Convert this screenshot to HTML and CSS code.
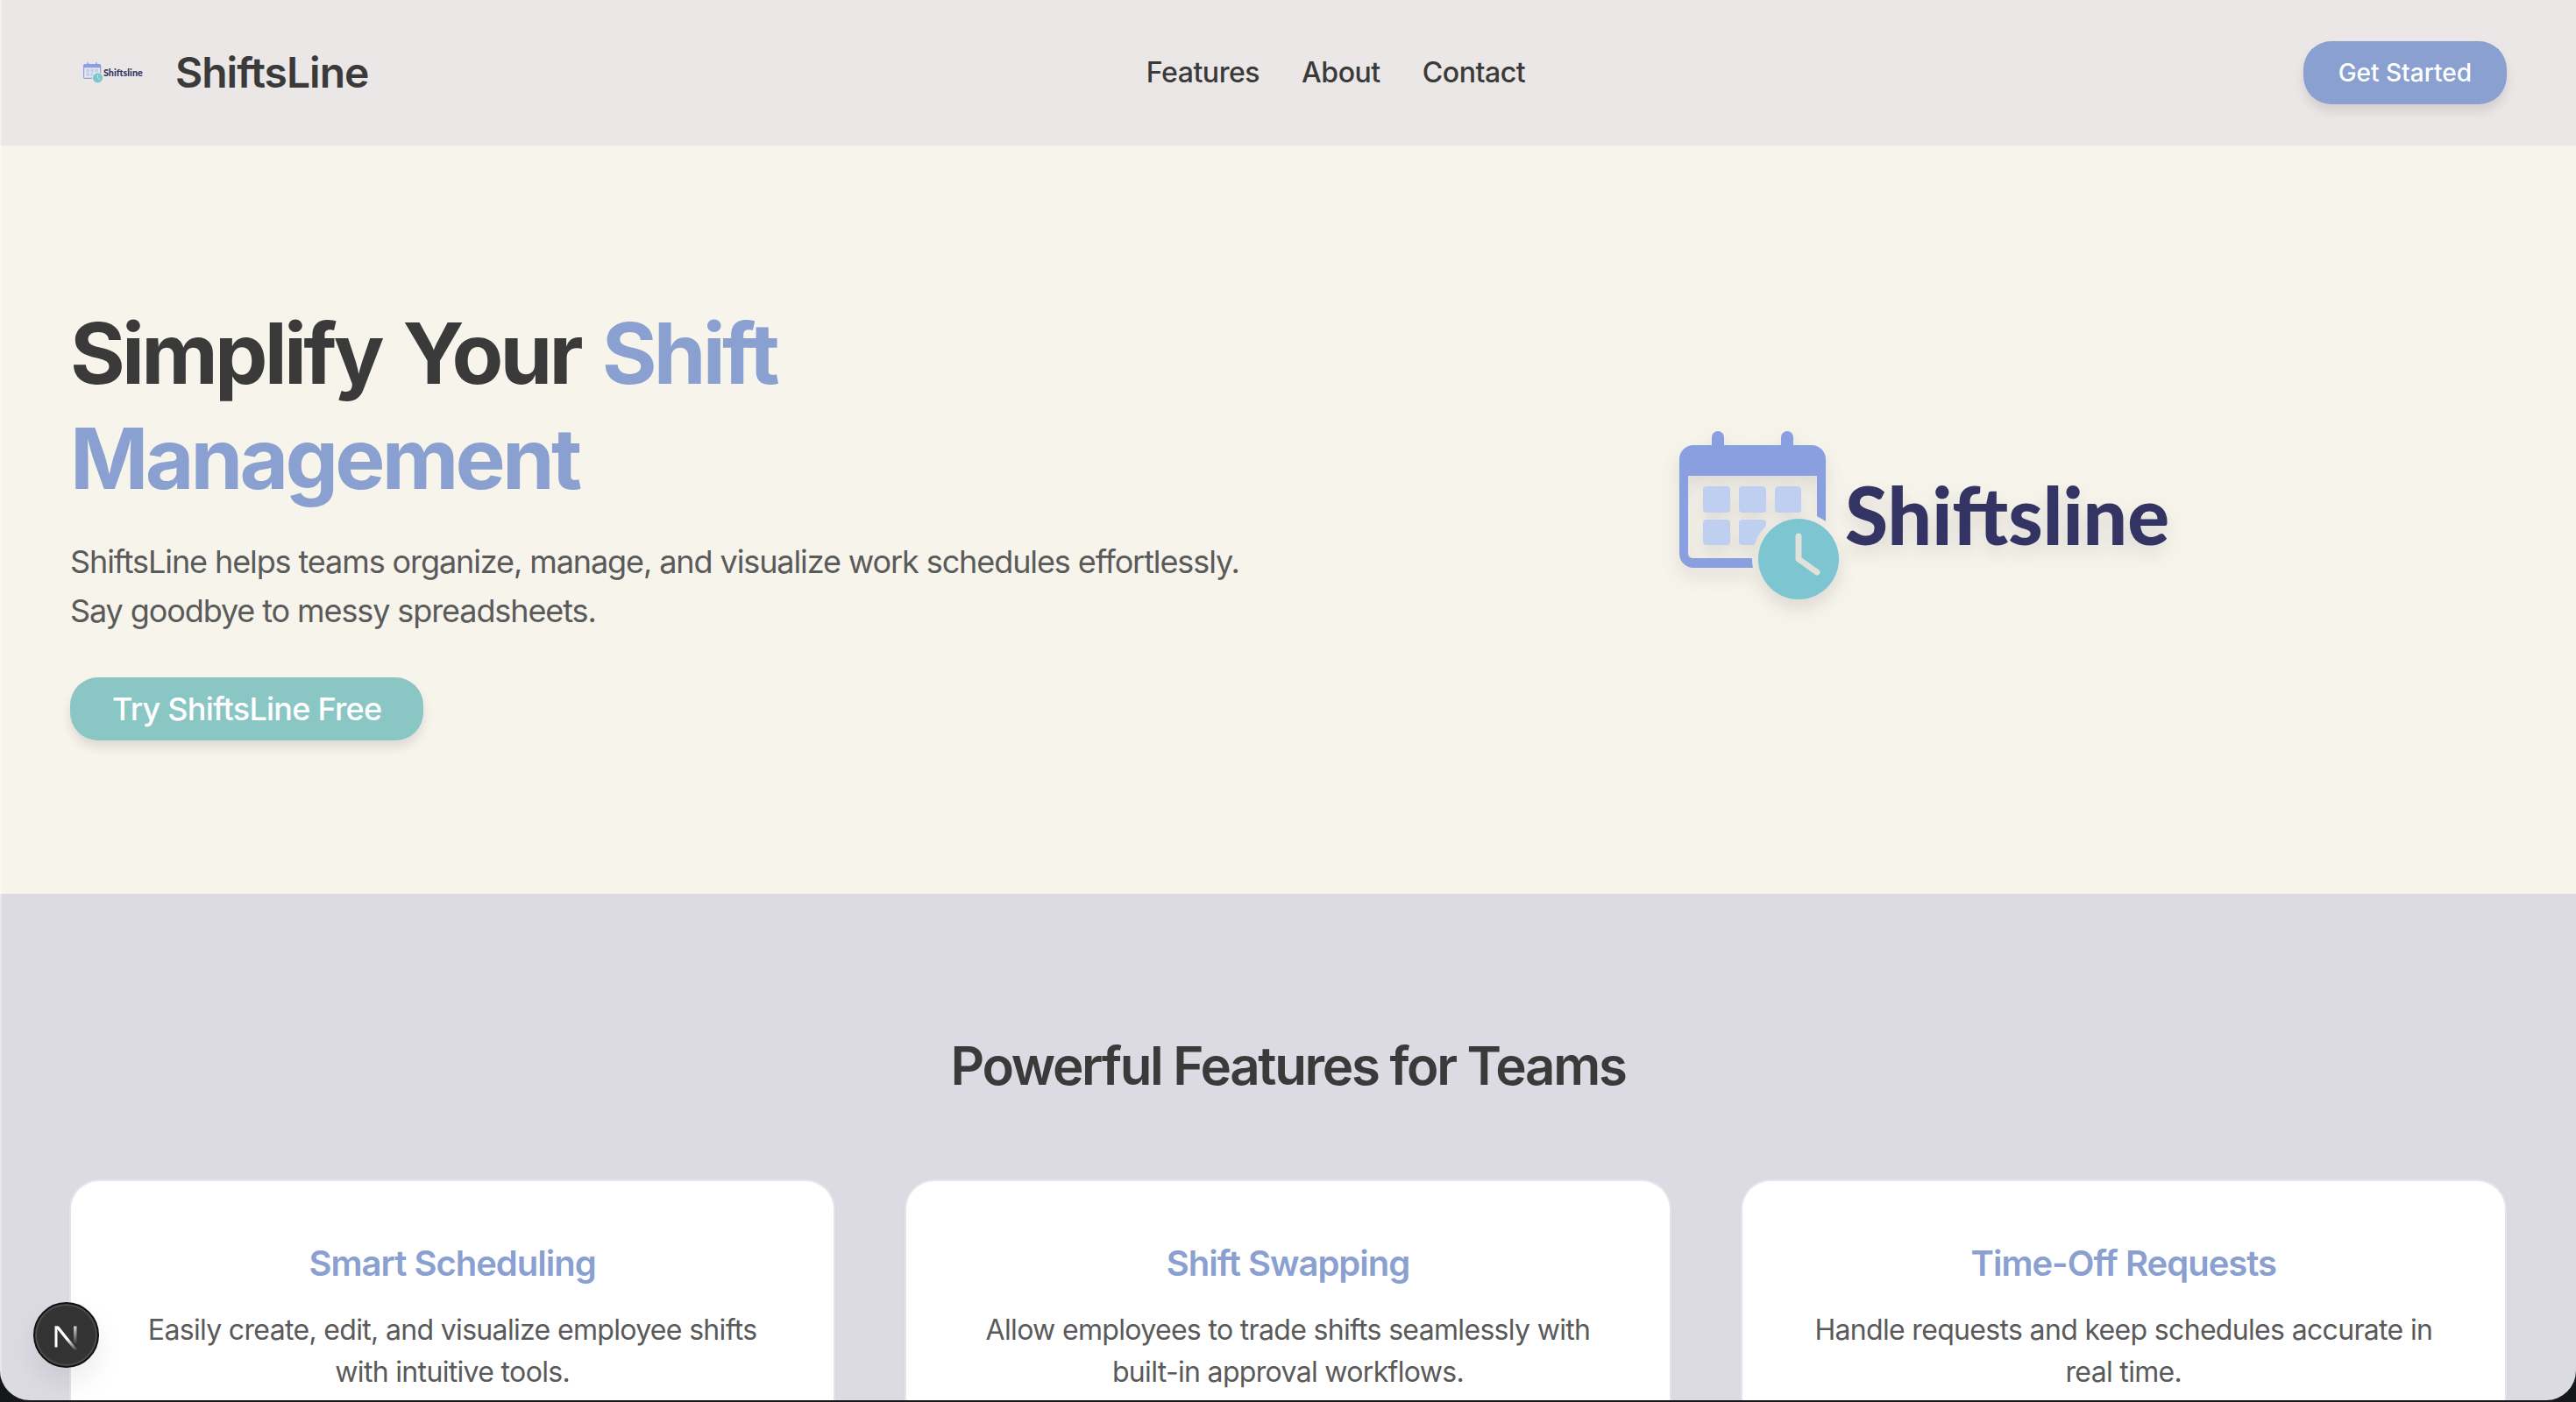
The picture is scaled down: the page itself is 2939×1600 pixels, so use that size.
FILE: index.html
```html
<!DOCTYPE html>
<html lang="en">
<head>
  <meta charset="UTF-8" />
  <title>ShiftsLine</title>
  <meta name="viewport" content="width=device-width, initial-scale=1.0"/>
  <link rel="stylesheet" href="styles.css">
</head>

<body>
  <!-- Shared logo art, used in the navbar and the hero -->
  <svg class="defs" width="0" height="0" aria-hidden="true">
    <defs>
      <mask id="clockCut" maskUnits="userSpaceOnUse" x="0" y="0" width="560" height="200">
        <rect width="560" height="200" fill="#fff"/>
        <circle cx="136" cy="146" r="53" fill="#000"/>
      </mask>
      <symbol id="logoArt" viewBox="0 0 560 196">
        <g mask="url(#clockCut)">
          <path fill="#8a9fe0" fill-rule="evenodd" d="M37 16V7a7 7 0 0 1 14 0v9h65V7a7 7 0 0 1 14 0v9h21a16 16 0 0 1 16 16v108a16 16 0 0 1-16 16H16a16 16 0 0 1-16-16V32a16 16 0 0 1 16-16zM10 51v89a5 5 0 0 0 5 5h142V51z"/>
          <rect x="27" y="63" width="31" height="30" rx="4" fill="#bfcfef"/>
          <rect x="68" y="63" width="31" height="30" rx="4" fill="#bfcfef"/>
          <rect x="109" y="63" width="30" height="30" rx="4" fill="#bfcfef"/>
          <rect x="27" y="101" width="31" height="29" rx="4" fill="#bfcfef"/>
          <rect x="68" y="101" width="31" height="29" rx="4" fill="#bfcfef"/>
        </g>
        <circle cx="136" cy="146" r="46" fill="#7cc5d1"/>
        <path d="M136 120v26l21 15" fill="none" stroke="#dfe1da" stroke-width="7" stroke-linecap="round" stroke-linejoin="round"/>
        <text x="189" y="130" class="logo-word" textLength="370" lengthAdjust="spacingAndGlyphs">Shiftsline</text>
      </symbol>
    </defs>
  </svg>

  <div class="page">
    <!-- Navbar -->
    <header class="navbar">
      <a class="brand" href="#">
        <span class="brand-logo">
          <svg width="68" height="24" viewBox="0 0 560 196"><use href="#logoArt"/></svg>
        </span>
        <span class="brand-name">ShiftsLine</span>
      </a>
      <nav class="nav-links">
        <a href="#features">Features</a>
        <a href="#about">About</a>
        <a href="#contact">Contact</a>
      </nav>
      <a class="btn btn-nav" href="#">Get Started</a>
    </header>

    <!-- Hero -->
    <section class="hero">
      <div class="hero-text">
        <h1>Simplify Your <span class="accent">Shift Management</span></h1>
        <p>ShiftsLine helps teams organize, manage, and visualize work schedules effortlessly.<br>Say goodbye to messy spreadsheets.</p>
        <a class="btn btn-hero" href="#">Try ShiftsLine Free</a>
      </div>
      <div class="hero-visual">
        <svg class="hero-logo" width="560" height="196" viewBox="0 0 560 196"><use href="#logoArt"/></svg>
      </div>
    </section>

    <!-- Features -->
    <section class="features" id="features">
      <h2>Powerful Features for Teams</h2>
      <div class="feature-grid">
        <article class="card">
          <h3>Smart Scheduling</h3>
          <p>Easily create, edit, and visualize employee shifts with intuitive tools.</p>
        </article>
        <article class="card">
          <h3>Shift Swapping</h3>
          <p>Allow employees to trade shifts seamlessly with built-in approval workflows.</p>
        </article>
        <article class="card">
          <h3>Time-Off Requests</h3>
          <p>Handle requests and keep schedules accurate in real time.</p>
        </article>
      </div>
    </section>

    <!-- Dev indicator -->
    <div class="dev-badge">
      <svg width="34" height="34" viewBox="0 0 34 34">
        <defs>
          <linearGradient id="nFade" x1="0" y1="0" x2="0" y2="1">
            <stop offset="0.55" stop-color="#fff"/>
            <stop offset="1" stop-color="#fff" stop-opacity="0.1"/>
          </linearGradient>
          <linearGradient id="nStem" x1="0" y1="0" x2="0" y2="1">
            <stop offset="0" stop-color="#fff" stop-opacity="0.8"/>
            <stop offset="1" stop-color="#fff" stop-opacity="0"/>
          </linearGradient>
        </defs>
        <rect x="3.5" y="6.5" width="3" height="24" fill="#fff"/>
        <polygon points="3.5,6.5 8,6.5 29.5,33.5 25.5,33.5" fill="url(#nFade)"/>
        <rect x="25" y="6.5" width="3.5" height="21" fill="url(#nStem)"/>
      </svg>
    </div>
  </div>
</body>
</html>
```

FILE: styles.css
```css
/* =============== BASE =============== */
html,
body {
  margin: 0;
  padding: 0;
  height: 100%;
  overflow: hidden;
  background: #15181a;
  font-family: "Inter", "Liberation Sans", sans-serif;
  color: #3a3a3a;
  -webkit-font-smoothing: antialiased;
}

a {
  color: inherit;
  text-decoration: none;
}

.defs {
  position: absolute;
}

.logo-word {
  font-family: "Lato", "Noto Sans", sans-serif;
  font-weight: 900;
  font-size: 92px;
  fill: #343464;
}

.page {
  position: relative;
  height: calc(100vh - 2px);
  overflow: hidden;
  border-radius: 0 0 34px 34px;
  background: #dcdae2;
}

/* thin light edge of the window */
.page::after {
  content: "";
  position: absolute;
  left: 0;
  top: 0;
  bottom: 0;
  width: 2px;
  background: rgba(255, 255, 255, 0.35);
}

.accent {
  color: #8aa0d0;
}

/* =============== NAVBAR =============== */
.navbar {
  display: flex;
  align-items: center;
  justify-content: space-between;
  height: 166px;
  padding: 0 79px 0 80px;
  background: #ebe7e6;
}

.brand {
  display: flex;
  align-items: center;
  gap: 22px;
}

.brand-logo {
  display: flex;
  justify-content: center;
  width: 98px;
}

.brand-name {
  font-size: 48px;
  font-weight: 600;
  line-height: 64px;
  letter-spacing: -1px;
}

.nav-links {
  display: flex;
  gap: 48px;
  font-size: 32px;
  font-weight: 500;
  line-height: 48px;
  letter-spacing: -0.45px;
}

/* =============== BUTTONS =============== */
.btn {
  display: inline-block;
  color: #fff;
  font-weight: 500;
  border-radius: 32px;
  box-sizing: border-box;
  height: 72px;
  line-height: 72px;
  box-shadow: 0 8px 12px rgba(0, 0, 0, 0.1);
}

.btn-nav {
  background: #8aa0d0;
  font-size: 28px;
  padding: 0 40px;
}

.btn-hero {
  background: #8ac6c4;
  font-size: 36px;
  letter-spacing: -0.75px;
  padding: 0 48px;
}

/* =============== HERO =============== */
.hero {
  display: grid;
  grid-template-columns: 1400px 1fr;
  gap: 51px;
  align-items: center;
  height: 854px;
  box-sizing: border-box;
  padding: 0 80px;
  background: #f7f4ec;
}

.hero-text h1 {
  margin: 0;
  padding-top: 2px;
  font-size: 96px;
  font-weight: 700;
  line-height: 120px;
  letter-spacing: -3.8px;
  word-spacing: 6px;
}

.hero-text p {
  margin: 30px 0 48px;
  font-size: 36px;
  line-height: 56px;
  letter-spacing: -1.1px;
  color: #5a5a5a;
}

.hero-visual {
  display: flex;
  justify-content: center;
  padding: 0 0 6px 2px;
}

.hero-logo {
  filter: drop-shadow(0 10px 10px rgba(60, 60, 60, 0.14));
}

/* =============== FEATURES =============== */
.features {
  padding: 160px 81px 0;
}

.features h2 {
  margin: 0 0 96px;
  font-size: 60px;
  font-weight: 600;
  line-height: 72px;
  letter-spacing: -2.3px;
  text-align: center;
}

.feature-grid {
  display: grid;
  grid-template-columns: repeat(3, 1fr);
  gap: 83px;
}

.card {
  padding: 66px 64px 64px;
  background: #fff;
  border-radius: 32px;
  box-shadow: 0 0 0 2px rgba(255, 255, 255, 0.35), 0 2px 6px rgba(0, 0, 0, 0.05);
  text-align: center;
}

.card h3 {
  margin: 0 0 24px;
  font-size: 40px;
  font-weight: 600;
  line-height: 56px;
  letter-spacing: -1px;
  color: #8aa0d0;
}

.card p {
  margin: 0;
  font-size: 32px;
  line-height: 48px;
  letter-spacing: -0.67px;
  color: #5a5a5a;
}

/* =============== DEV BADGE =============== */
.dev-badge {
  position: absolute;
  left: 38px;
  bottom: 37px;
  display: flex;
  align-items: center;
  justify-content: center;
  width: 75px;
  height: 75px;
  box-sizing: border-box;
  border-radius: 50%;
  background: #333;
  border: 2px solid #111;
  box-shadow: inset 0 0 0 2px #4d4d4d, 0 16px 32px rgba(0, 0, 0, 0.08);
}
```
